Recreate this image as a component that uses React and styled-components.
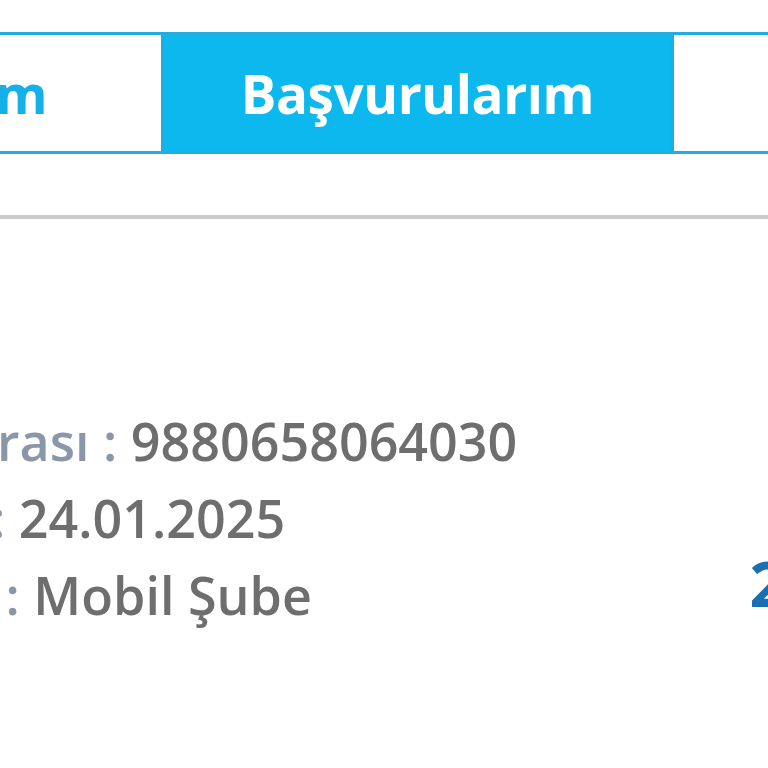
import React from "react";
import styled, { createGlobalStyle } from "styled-components";

const GlobalStyle = createGlobalStyle`
  html, body {
    margin: 0;
    padding: 0;
    background: #fff;
    overflow: hidden;
  }
  body {
    font-family: "Open Sans", "Noto Sans", sans-serif;
  }
`;

const Page = styled.div`
  width: 768px;
  height: 768px;
  overflow: hidden;
  background: #fff;
`;

// the tab strip is wider than the visible crop, so it is pulled left
const TabBar = styled.div`
  display: flex;
  width: 1533px;
  height: 122px;
  margin: 32px 0 0 -349px;
  box-sizing: border-box;
  border: 3px solid #22ade0;
`;

const Tab = styled.div`
  flex: 1;
  display: flex;
  align-items: center;
  justify-content: center;
  box-sizing: border-box;
  border-left: ${(p) => (p.$first ? "none" : "3px solid #22ade0")};
  background: ${(p) => (p.$active ? "#0db8ee" : "#fff")};
  color: ${(p) => (p.$active ? "#fff" : "#14b0e8")};
  font-size: 53px;
  font-weight: 700;
  letter-spacing: -0.4px;
`;

const Divider = styled.div`
  height: 4px;
  margin-top: 61px;
  background: #cbcbcb;
`;

const Card = styled.div`
  display: flex;
  justify-content: space-between;
  padding-top: 183px;
`;

const Details = styled.div`
  display: flex;
  flex-direction: column;
  margin-left: -376px;
  white-space: nowrap;
`;

const Row = styled.div`
  font-size: 52px;
  font-weight: 600;
  line-height: 77px;
  margin-left: ${(p) => p.$shift || 0}px;
`;

const Label = styled.span`
  color: #8a97a8;
`;

const Value = styled.span`
  color: #6e6e6e;
`;

const Amount = styled.div`
  align-self: flex-end;
  margin-bottom: 8px;
  margin-right: -232px;
  color: #1a6fb2;
  font-size: 63px;
  font-weight: 700;
  white-space: nowrap;
`;

export default function App() {
  return (
    <Page>
      <GlobalStyle />
      <TabBar>
        <Tab $first>Taleplerim</Tab>
        <Tab $active>Başvurularım</Tab>
        <Tab>Kartlarım</Tab>
      </TabBar>
      <Divider />
      <Card>
        <Details>
          <Row>
            <Label>Başvuru Numarası : </Label>
            <Value>9880658064030</Value>
          </Row>
          <Row $shift={-10}>
            <Label>Başvuru Tarihi : </Label>
            <Value>24.01.2025</Value>
          </Row>
          <Row $shift={-7}>
            <Label>Başvuru Kanalı : </Label>
            <Value>Mobil Şube</Value>
          </Row>
        </Details>
        <Amount>2.500 TL</Amount>
      </Card>
    </Page>
  );
}
